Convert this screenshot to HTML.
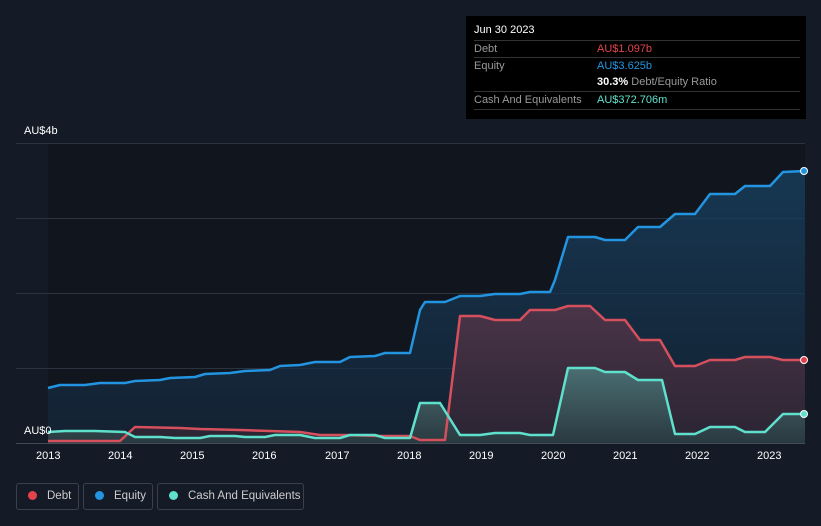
<!DOCTYPE html>
<html><head><meta charset="utf-8"><style>
html,body{margin:0;width:821px;height:526px;overflow:hidden}
body{background:#151b26;font-family:"Liberation Sans",sans-serif;position:relative}
.tt{position:absolute;left:466px;top:16px;width:340px;height:103px;background:#000;color:#fff;font-size:11px}
.tt .r{position:absolute;left:8px;right:6px;border-top:1px solid #333;height:17px;line-height:17px}
.lab{color:#999}
.v{position:absolute;left:123px;top:0;white-space:nowrap}
.leg{position:absolute;top:483px;height:27px;border:1px solid #3a404c;border-radius:3px;color:#ccc;font-size:11.5px;line-height:25px;box-sizing:border-box;white-space:nowrap}
.leg i{display:inline-block;width:9px;height:9px;border-radius:50%;margin:0 10px 0 11px;vertical-align:-1px}
.ax{position:absolute;color:#fff;font-size:11px}
</style></head><body>
<svg width="821" height="526" style="position:absolute;left:0;top:0">
<defs>
<linearGradient id="ge" x1="0" y1="0" x2="0" y2="1"><stop offset="0" stop-color="#18405f" stop-opacity=".8"/><stop offset="1" stop-color="#152a40" stop-opacity=".6"/></linearGradient>
<linearGradient id="gd" x1="0" y1="0" x2="0" y2="1"><stop offset="0" stop-color="#4a3448"/><stop offset="1" stop-color="#2a2433"/></linearGradient>
<linearGradient id="gc" x1="0" y1="0" x2="0" y2="1"><stop offset="0" stop-color="#4a6e72"/><stop offset="1" stop-color="#2a3940"/></linearGradient>
</defs>
<rect x="48" y="143" width="757" height="300" fill="#11151e"/>
<g stroke="#2b3340" stroke-width="1">
<line x1="16" y1="143.5" x2="805" y2="143.5"/><line x1="16" y1="218.5" x2="805" y2="218.5"/><line x1="16" y1="293.5" x2="805" y2="293.5"/><line x1="16" y1="368.5" x2="805" y2="368.5"/><line x1="16" y1="443.5" x2="805" y2="443.5" stroke="#444b57"/>
</g>
<polygon fill="url(#ge)" points="48,388 60,385 85,385 100,383 125,383 135,381 160,380 170,378 195,377 205,374 230,373 245,371 270,370 280,366 300,365 315,362 340,362 350,357 375,356 385,353 410,353 420,310 425,302 445,302 460,296 480,296 495,294 520,294 530,292 550,292 555,280 568,237 595,237 605,240 625,240 638,227 660,227 675,214 695,214 710,194 735,194 745,186 770,186 783,172 805,171 805,443 48,443"/>
<polygon fill="url(#gd)" points="48,441 120,441 135,427 180,428 200,429 240,430 270,431 300,432 320,435 345,435 380,436 410,436 420,440 445,440 460,316 480,316 495,320 520,320 530,310 555,310 568,306 590,306 605,320 625,320 640,340 660,340 675,366 695,366 710,360 735,360 745,357 770,357 783,360 805,360 805,443 48,443"/>
<polygon fill="url(#gc)" points="48,432 65,431 95,431 125,432 135,437 160,437 175,438 200,438 210,436 235,436 245,437 265,437 275,435 300,435 315,438 340,438 350,435 375,435 385,438 410,438 420,403 440,403 460,435 480,435 495,433 520,433 530,435 553,435 568,368 595,368 605,372 625,372 638,380 662,380 675,434 695,434 710,427 735,427 745,432 765,432 783,414 805,414 805,443 48,443"/>
<g fill="none" stroke-width="2.5" stroke-linejoin="round">
<polyline stroke="#2394e0" points="48,388 60,385 85,385 100,383 125,383 135,381 160,380 170,378 195,377 205,374 230,373 245,371 270,370 280,366 300,365 315,362 340,362 350,357 375,356 385,353 410,353 420,310 425,302 445,302 460,296 480,296 495,294 520,294 530,292 550,292 555,280 568,237 595,237 605,240 625,240 638,227 660,227 675,214 695,214 710,194 735,194 745,186 770,186 783,172 805,171"/>
<polyline stroke="#d5505c" points="48,441 120,441 135,427 180,428 200,429 240,430 270,431 300,432 320,435 345,435 380,436 410,436 420,440 445,440 460,316 480,316 495,320 520,320 530,310 555,310 568,306 590,306 605,320 625,320 640,340 660,340 675,366 695,366 710,360 735,360 745,357 770,357 783,360 805,360"/>
<polyline stroke="#5fe0cc" points="48,432 65,431 95,431 125,432 135,437 160,437 175,438 200,438 210,436 235,436 245,437 265,437 275,435 300,435 315,438 340,438 350,435 375,435 385,438 410,438 420,403 440,403 460,435 480,435 495,433 520,433 530,435 553,435 568,368 595,368 605,372 625,372 638,380 662,380 675,434 695,434 710,427 735,427 745,432 765,432 783,414 805,414"/>
</g>
<circle cx="804" cy="171" r="3.5" fill="#2394e0" stroke="#fff"/>
<circle cx="804" cy="360" r="3.5" fill="#e0404c" stroke="#fff"/>
<circle cx="804" cy="414" r="3.5" fill="#5fe0cc" stroke="#fff"/>
</svg>
<div class="ax" style="left:24px;top:125px">AU$4b</div>
<div class="ax" style="left:24px;top:425px">AU$0</div>
<div class="ax" style="left:36px;top:450px">2013</div><div class="ax" style="left:108px;top:450px">2014</div><div class="ax" style="left:180px;top:450px">2015</div><div class="ax" style="left:252px;top:450px">2016</div><div class="ax" style="left:325px;top:450px">2017</div><div class="ax" style="left:397px;top:450px">2018</div><div class="ax" style="left:469px;top:450px">2019</div><div class="ax" style="left:541px;top:450px">2020</div><div class="ax" style="left:613px;top:450px">2021</div><div class="ax" style="left:685px;top:450px">2022</div><div class="ax" style="left:757px;top:450px">2023</div>
<div class="tt">
<div style="position:absolute;left:8px;top:8px">Jun 30 2023</div>
<div class="r" style="top:24px"><span class="lab">Debt</span><span class="v" style="color:#e5434c">AU$1.097b</span></div>
<div class="r" style="top:41px"><span class="lab">Equity</span><span class="v" style="color:#2394e0">AU$3.625b</span></div>
<div class="r" style="top:58px;border:0"><span class="v"><b>30.3%</b> <span class="lab">Debt/Equity Ratio</span></span></div>
<div class="r" style="top:75px"><span class="lab">Cash And Equivalents</span><span class="v" style="color:#5fe0cc">AU$372.706m</span></div>
<div class="r" style="top:93px;height:0"></div>
</div>
<div class="leg" style="left:16px;width:63px"><i style="background:#e5434c"></i>Debt</div>
<div class="leg" style="left:83px;width:70px"><i style="background:#2394e0"></i>Equity</div>
<div class="leg" style="left:157px;width:147px"><i style="background:#5fe0cc"></i>Cash And Equivalents</div>
</body></html>
